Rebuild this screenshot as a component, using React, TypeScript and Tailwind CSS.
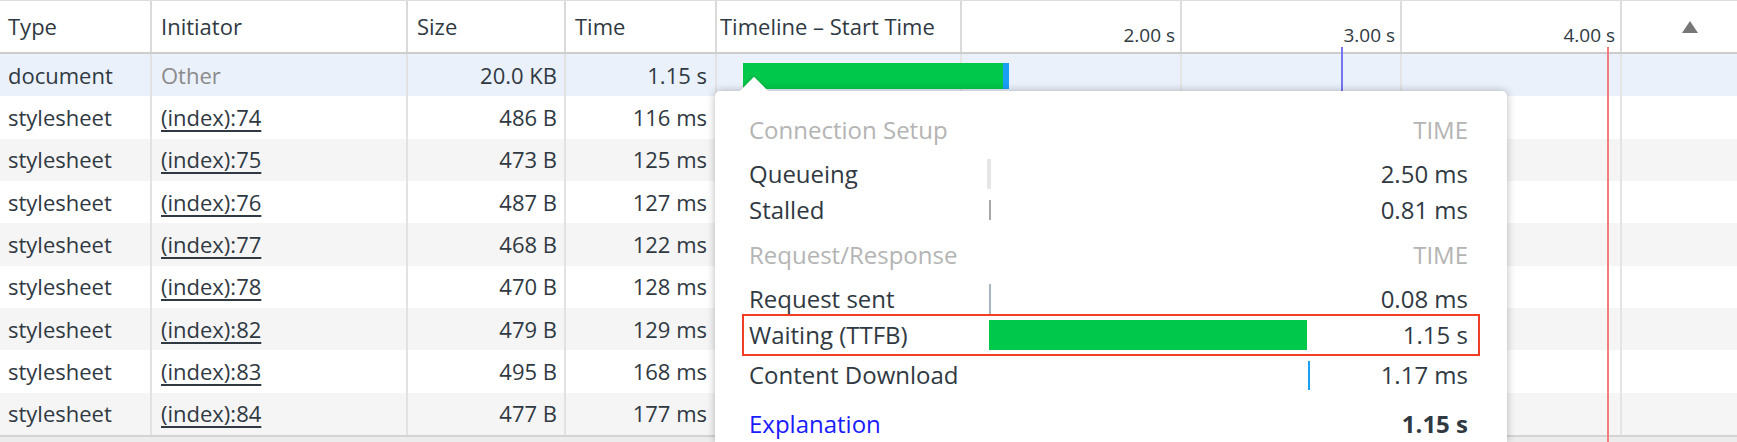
const rows = [
  { type: "document", initiator: "Other", link: false, size: "20.0 KB", time: "1.15 s" },
  { type: "stylesheet", initiator: "(index):74", link: true, size: "486 B", time: "116 ms" },
  { type: "stylesheet", initiator: "(index):75", link: true, size: "473 B", time: "125 ms" },
  { type: "stylesheet", initiator: "(index):76", link: true, size: "487 B", time: "127 ms" },
  { type: "stylesheet", initiator: "(index):77", link: true, size: "468 B", time: "122 ms" },
  { type: "stylesheet", initiator: "(index):78", link: true, size: "470 B", time: "128 ms" },
  { type: "stylesheet", initiator: "(index):82", link: true, size: "479 B", time: "129 ms" },
  { type: "stylesheet", initiator: "(index):83", link: true, size: "495 B", time: "168 ms" },
  { type: "stylesheet", initiator: "(index):84", link: true, size: "477 B", time: "177 ms" },
];

function HeaderRow() {
  return (
    <div className="flex h-[54px] border-t border-b-2 border-t-[#dedede] border-b-[#cdcdcd] bg-white text-[22px] text-[#303942]">
      <div className="flex w-[152px] items-center border-r-2 border-[#dadada] pl-[8px]">Type</div>
      <div className="flex w-[256px] items-center border-r-2 border-[#dadada] pl-[9px]">Initiator</div>
      <div className="flex w-[158px] items-center border-r-2 border-[#dadada] pl-[9px]">Size</div>
      <div className="flex w-[151px] items-center border-r-2 border-[#dadada] pl-[9px]">Time</div>
      <div className="flex flex-1">
        <div className="flex w-[245px] items-center border-r-2 border-[#dadada] pl-[3px]">Timeline – Start Time</div>
        {["2.00 s", "3.00 s", "4.00 s"].map((t) => (
          <div
            key={t}
            className="flex w-[220px] items-end justify-end border-r-2 border-[#dcdcdc] pb-[4px] pr-[5px] text-[19px] leading-[26px]"
          >
            {t}
          </div>
        ))}
        <div className="flex flex-1 items-center pl-[60px]">
          <div className="h-0 w-0 border-x-[8px] border-b-[12px] border-x-transparent border-b-[#777777]" />
        </div>
      </div>
    </div>
  );
}

function BodyRow({ r, i }: { r: (typeof rows)[number]; i: number }) {
  const bg = i === 0 ? "bg-[#eaf1fb]" : i % 2 === 0 ? "bg-[#f5f5f5]" : "bg-white";
  return (
    <div className={`flex h-[42.33px] text-[22px] text-[#303942] ${bg}`}>
      <div className="flex w-[152px] items-center border-r-2 border-[#e2e2e2] pl-[8px]">{r.type}</div>
      <div className="flex w-[256px] items-center border-r-2 border-[#e2e2e2] pl-[9px]">
        {r.link ? (
          <span className="underline decoration-[2px] underline-offset-[4px]">{r.initiator}</span>
        ) : (
          <span className="text-[#8a8a8a]">{r.initiator}</span>
        )}
      </div>
      <div className="flex w-[158px] items-center justify-end border-r-2 border-[#e2e2e2] pr-[7px]">{r.size}</div>
      <div className="flex w-[151px] items-center justify-end border-r-2 border-[#e2e2e2] pr-[8px]">{r.time}</div>
      <div className="relative flex flex-1">
        <div className="w-[245px] border-r-2 border-[#e4e4e4]" />
        <div className="w-[220px] border-r-2 border-[#e4e4e4]" />
        <div className="w-[220px] border-r-2 border-[#e4e4e4]" />
        <div className="w-[220px] border-r-2 border-[#e4e4e4]" />
        <div className="flex-1" />
        {i === 0 && (
          <div className="absolute left-[26px] top-[9px] flex h-[26px]">
            <div className="w-[260px] bg-[#00c84b]" />
            <div className="w-[6px] bg-[#1a9ff5]" />
          </div>
        )}
      </div>
    </div>
  );
}

function TimingRow({
  label,
  value,
  bar,
  className = "",
}: {
  label: string;
  value: string;
  bar: React.ReactNode;
  className?: string;
}) {
  return (
    <div className={`flex items-center pl-[7px] pr-[12px] ${className}`}>
      <div className="w-[240px] shrink-0 text-[#303942]">{label}</div>
      <div className="flex h-full flex-1 items-center">{bar}</div>
      <div className="text-[#303942]">{value}</div>
    </div>
  );
}

function Popover() {
  return (
    <div className="absolute bottom-0 left-[715px] top-[91px] w-[792px] font-['Open_Sans',sans-serif] text-[24px]">
      <div className="relative z-10 h-full rounded-t-[5px] bg-white px-[27px] pt-[17px] shadow-[0_0_9px_rgba(0,0,0,0.28)]">
        <div className="flex h-[44px] items-center justify-between pl-[7px] pr-[12px] text-[#b4b4b4]">
          <span>Connection Setup</span>
          <span>TIME</span>
        </div>
        <TimingRow
          className="mt-[4px] h-[36px]"
          label="Queueing"
          value="2.50 ms"
          bar={<div className="-ml-[2px] h-[30px] w-[4px] bg-[#e6e6e6]" />}
        />
        <TimingRow
          className="h-[36px]"
          label="Stalled"
          value="0.81 ms"
          bar={<div className="h-[20px] w-[2px] bg-[#a8a8a8]" />}
        />
        <div className="mt-[5px] flex h-[44px] items-center justify-between pl-[7px] pr-[12px] text-[#b4b4b4]">
          <span>Request/Response</span>
          <span>TIME</span>
        </div>
        <TimingRow
          className="mt-[7px] h-[30px]"
          label="Request sent"
          value="0.08 ms"
          bar={<div className="h-[30px] w-[2px] bg-[#a9b6c2]" />}
        />
        <div className="flex h-[42px] items-center border-2 border-[#f23d22] pl-[5px] pr-[10px]">
          <div className="w-[240px] shrink-0 text-[#303942]">Waiting (TTFB)</div>
          <div className="flex flex-1 items-center">
            <div className="h-[30px] w-[318px] bg-[#00c84b]" />
          </div>
          <div className="text-[#303942]">1.15 s</div>
        </div>
        <TimingRow
          className="mt-[2px] h-[34px]"
          label="Content Download"
          value="1.17 ms"
          bar={<div className="ml-[319px] h-[29px] w-[2px] bg-[#1aa1f0]" />}
        />
        <div className="mt-[14px] flex h-[36px] items-center justify-between pl-[7px] pr-[12px]">
          <span className="text-[#1a1aff]">Explanation</span>
          <span className="font-bold text-[#303942]">1.15 s</span>
        </div>
      </div>
      <div className="absolute left-[29px] top-[-10px] z-20 h-[20px] w-[20px] rotate-45 bg-white shadow-[-2px_-2px_3px_-1px_rgba(0,0,0,0.14)]" />
    </div>
  );
}

export default function App() {
  return (
    <div className="relative h-[442px] w-[1737px] overflow-hidden bg-white font-['Open_Sans',sans-serif]">
      <HeaderRow />
      {rows.map((r, i) => (
        <BodyRow key={i} r={r} i={i} />
      ))}
      <div className="h-[7px] border-t-2 border-[#d4d4d4] bg-[#ececec]" />
      {/* DOMContentLoaded / load markers */}
      <div className="absolute bottom-0 left-[1341px] top-[47px] w-[2px] bg-[#7676f4]" />
      <div className="absolute bottom-0 left-[1607px] top-[47px] w-[2px] bg-[#f47c7c]" />
      <Popover />
    </div>
  );
}
